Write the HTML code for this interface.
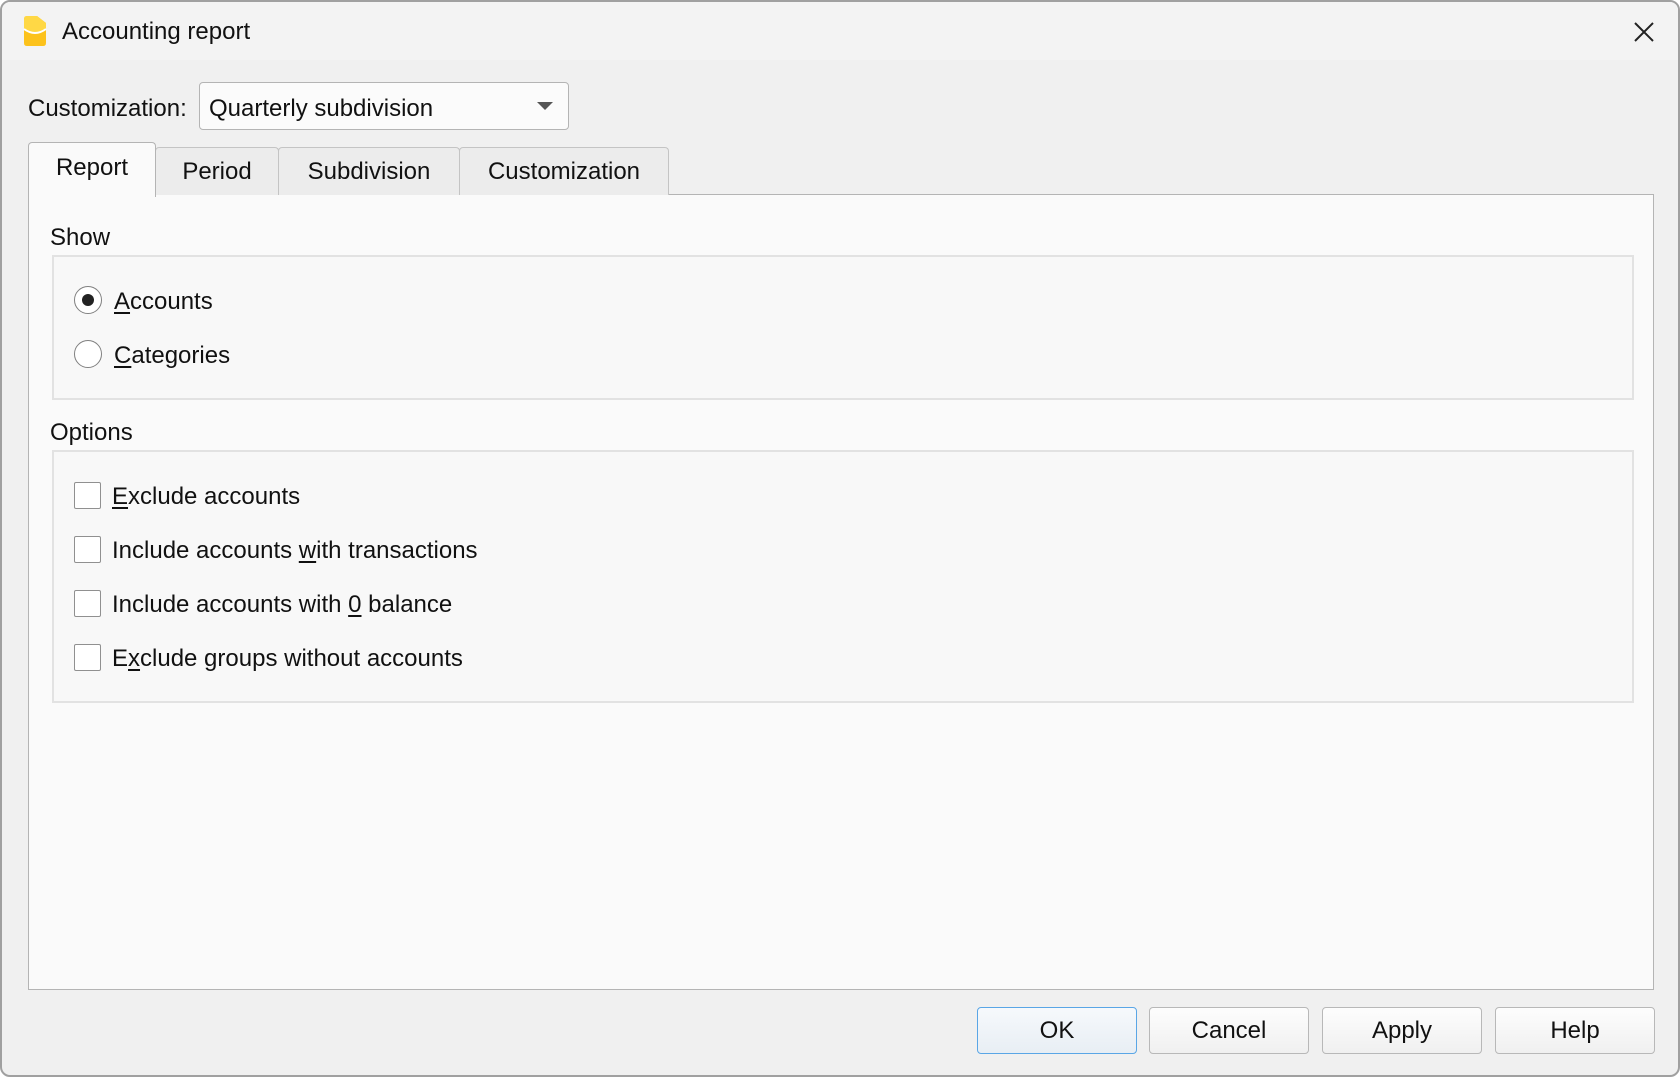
<!DOCTYPE html>
<html><head><meta charset="utf-8"><style>
*{box-sizing:border-box;margin:0;padding:0}
body{width:1680px;height:1077px;background:#fff;font-family:"Liberation Sans",sans-serif;font-size:24px;color:#111;position:relative;overflow:hidden}
.win{position:absolute;left:0;top:0;width:1680px;height:1077px;background:#f0f0f0;border:2px solid #a0a0a0;border-radius:10px;overflow:hidden}
.title{position:absolute;left:0;top:0;width:100%;height:58px;background:#f3f3f3}
.abs{position:absolute}
.pane{position:absolute;left:26px;top:192px;width:1626px;height:796px;background:#fafafa;border:1.5px solid #b4b4b4}
.tab{position:absolute;top:145px;height:48px;border:1.5px solid #c4c4c4;border-bottom:none;background:#ececec;border-radius:4px 4px 0 0;text-align:center;line-height:48px}
.grp{position:absolute;border:2px solid #e2e2e2;background:#f8f8f8}
.cb{position:absolute;width:27px;height:27px;border:1.5px solid #909090;background:#fff;border-radius:2px}
.rd{position:absolute;width:28px;height:28px;border:1.5px solid #808080;border-radius:50%;background:#fff}
.btn{position:absolute;top:1005px;height:47px;width:160px;border:1.5px solid #b8b8b8;border-radius:4px;background:linear-gradient(#fdfdfd,#f0f0f0);text-align:center;line-height:45px}
u{text-decoration:underline;text-underline-offset:3px}
</style></head><body>
<div class="win">
<div class="title"></div>
<svg class="abs" style="left:20px;top:13px" width="26" height="32" viewBox="0 0 26 32"><path d="M2 4 Q2 1 5 1 L15 1 L24 8 L24 28 Q24 31 21 31 L5 31 Q2 31 2 28Z" fill="#fcc21b"/><path d="M2 4 Q2 1 5 1 L15 1 L24 8 L24 14 Q13 22 2 14Z" fill="#ffd845"/><path d="M2 14 Q13 22 24 14" stroke="#fff" stroke-width="2" fill="none"/></svg>
<div class="abs" style="left:60px;top:16px">Accounting report</div>
<svg class="abs" style="left:1630px;top:18px" width="24" height="24" viewBox="0 0 24 24"><path d="M3 3L21 21M21 3L3 21" stroke="#222" stroke-width="2"/></svg>
<div class="abs" style="left:26px;top:93px">Customization:</div>
<div class="abs" style="left:197px;top:80px;width:370px;height:48px;border:1.5px solid #b4b4b4;border-radius:4px;background:#fbfbfb"></div>
<div class="abs" style="left:207px;top:93px">Quarterly subdivision</div>
<svg class="abs" style="left:534px;top:99px" width="18" height="10"><path d="M1 1L17 1L9 9Z" fill="#555"/></svg>
<div class="pane"></div>
<div class="tab" style="left:153px;width:124px">Period</div>
<div class="tab" style="left:276px;width:182px">Subdivision</div>
<div class="tab" style="left:457px;width:210px">Customization</div>
<div class="tab" style="left:26px;width:128px;top:140px;height:55px;background:#fafafa;line-height:50px;border-color:#b4b4b4">Report</div>
<div class="abs" style="left:48px;top:222px">Show</div>
<div class="grp" style="left:50px;top:253px;width:1582px;height:145px"></div>
<div class="rd" style="left:72px;top:284px"></div><div class="abs" style="left:80px;top:292px;width:12px;height:12px;border-radius:50%;background:#222"></div>
<div class="abs" style="left:112px;top:286px"><u>A</u>ccounts</div>
<div class="rd" style="left:72px;top:338px"></div>
<div class="abs" style="left:112px;top:340px"><u>C</u>ategories</div>
<div class="abs" style="left:48px;top:417px">Options</div>
<div class="grp" style="left:50px;top:448px;width:1582px;height:253px"></div>
<div class="cb" style="left:72px;top:480px"></div><div class="abs" style="left:110px;top:481px"><u>E</u>xclude accounts</div>
<div class="cb" style="left:72px;top:534px"></div><div class="abs" style="left:110px;top:535px">Include accounts <u>w</u>ith transactions</div>
<div class="cb" style="left:72px;top:588px"></div><div class="abs" style="left:110px;top:589px">Include accounts with <u>0</u> balance</div>
<div class="cb" style="left:72px;top:642px"></div><div class="abs" style="left:110px;top:643px">E<u>x</u>clude groups without accounts</div>
<div class="btn" style="left:975px;border-color:#5aa6e6;background:linear-gradient(#f6f9fc,#e8eef4)">OK</div>
<div class="btn" style="left:1147px">Cancel</div>
<div class="btn" style="left:1320px">Apply</div>
<div class="btn" style="left:1493px">Help</div>
</div>
</body></html>
